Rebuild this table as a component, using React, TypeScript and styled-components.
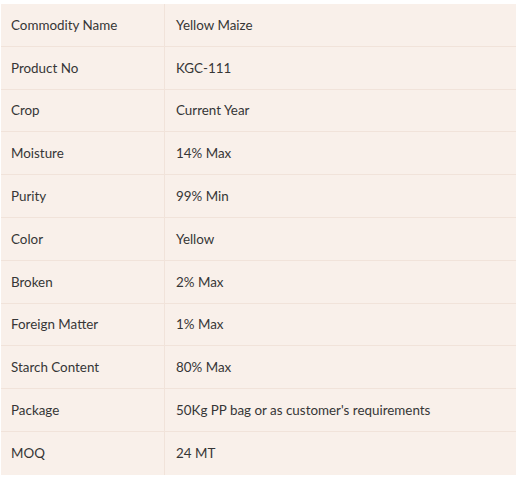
import React from "react";
import styled, { createGlobalStyle } from "styled-components";

const Global = createGlobalStyle`
  html, body { margin: 0; padding: 0; background: #ffffff; }
  body { font-family: "Lato", "Open Sans", sans-serif; }
`;

const Page = styled.div`
  padding: 4px 0 0 1px;
`;

const Table = styled.div`
  display: grid;
  grid-template-columns: 164px 1fr;
  background: #f9f0ea;
`;

const Cell = styled.div<{ $first?: boolean; $last?: boolean }>`
  height: 42.8px;
  box-sizing: border-box;
  display: flex;
  align-items: center;
  padding-left: ${(p) => (p.$first ? "10px" : "11px")};
  font-size: 13.4px;
  color: #363636;
  border-bottom: ${(p) => (p.$last ? "none" : "1px solid #f1e3da")};
  border-right: ${(p) => (p.$first ? "1px solid #f1e3da" : "none")};
`;

const rows: [string, string][] = [
  ["Commodity Name", "Yellow Maize"],
  ["Product No", "KGC-111"],
  ["Crop", "Current Year"],
  ["Moisture", "14% Max"],
  ["Purity", "99% Min"],
  ["Color", "Yellow"],
  ["Broken", "2% Max"],
  ["Foreign Matter", "1% Max"],
  ["Starch Content", "80% Max"],
  ["Package", "50Kg PP bag or as customer's requirements"],
  ["MOQ", "24 MT"],
];

export default function App() {
  return (
    <>
      <Global />
      <Page>
        <Table>
          {rows.map(([k, v], i) => (
            <React.Fragment key={k}>
              <Cell $first $last={i === rows.length - 1}>{k}</Cell>
              <Cell $last={i === rows.length - 1}>{v}</Cell>
            </React.Fragment>
          ))}
        </Table>
      </Page>
    </>
  );
}
